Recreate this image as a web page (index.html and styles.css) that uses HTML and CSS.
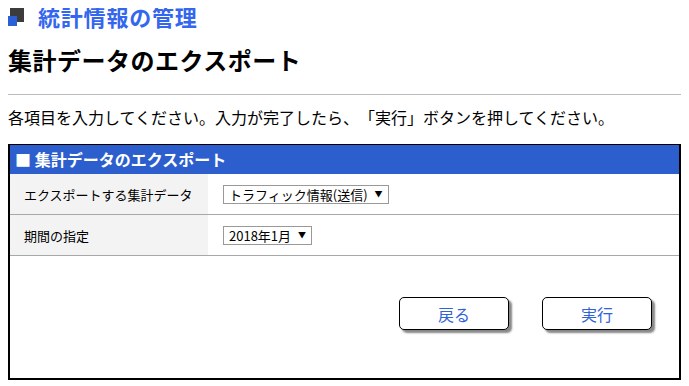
FILE: index.html
```html
<!DOCTYPE html>
<html>

<head>
    <title>統計情報の管理</title>
    <link rel="stylesheet" href="styles.css">
</head>

<body>
    <!-- Page heading -->
    <div class="page-title">
        <span class="title-icon">
            <span class="icon-back"></span>
            <span class="icon-front"></span>
        </span>
        <span class="title-text">統計情報の管理</span>
    </div>

    <h2 class="section-title">集計データのエクスポート</h2>
    <hr class="divider">

    <p class="lead">各項目を入力してください。入力が完了したら、「実行」ボタンを押してください。</p>

    <!-- Export form panel -->
    <div class="panel">
        <div class="panel-header">■ 集計データのエクスポート</div>

        <div class="form-row">
            <div class="form-label">エクスポートする集計データ</div>
            <div class="form-field">
                <div class="fake-select">トラフィック情報(送信)<span class="arrow">▼</span></div>
            </div>
        </div>

        <div class="form-row">
            <div class="form-label">期間の指定</div>
            <div class="form-field">
                <div class="fake-select">2018年1月<span class="arrow">▼</span></div>
            </div>
        </div>

        <div class="button-area">
            <button class="btn">戻る</button>
            <button class="btn">実行</button>
        </div>
    </div>
</body>

</html>
```

FILE: styles.css
```css
/* Base */
body {
    margin: 8px;
    font-family: "Noto Sans CJK JP", "Noto Sans", sans-serif;
    color: #000;
    background: #fff;
    text-spacing-trim: space-all;
}

/* Page title with the two-square icon */
.page-title {
    display: flex;
    align-items: center;
    height: 24px;
    margin-top: -4px;
}

.title-icon {
    position: relative;
    width: 17px;
    height: 20px;
    margin-left: -1px;
    margin-right: 14px;
}

.icon-back {
    position: absolute;
    left: 3px;
    top: 2px;
    width: 14px;
    height: 14px;
    background: #3c3c3c;
}

.icon-front {
    position: absolute;
    left: 0;
    top: 10px;
    width: 10px;
    height: 10px;
    background: #2a5fd6;
}

.title-text {
    font-size: 22px;
    font-weight: bold;
    color: #3466ee;
    letter-spacing: 0.8px;
}

/* Section heading */
.section-title {
    font-size: 24px;
    font-weight: bold;
    margin: 14px 0 0;
    line-height: 36px;
    letter-spacing: 0.5px;
}

.divider {
    border: none;
    border-top: 1px solid #bbb;
    margin: 16px 0 0;
}

.lead {
    font-size: 16px;
    margin: 10px 0 0;
    line-height: 24px;
}

/* Panel */
.panel {
    margin-top: 15px;
    border: 2px solid #000;
    border-top-width: 1px;
}

.panel-header {
    background: #2c5fcd;
    color: #fff;
    font-size: 16px;
    font-weight: bold;
    height: 29px;
    line-height: 28px;
    padding-left: 5px;
}

.form-row {
    display: flex;
    height: 40px;
    border-bottom: 1px solid #a8a8a8;
}

.form-label {
    width: 184px;
    background: #f3f3f3;
    font-size: 13px;
    padding-left: 14px;
    display: flex;
    align-items: center;
}

.form-field {
    display: flex;
    align-items: center;
    padding-left: 15px;
}

.fake-select {
    border: 1px solid #999;
    font-size: 13px;
    height: 17px;
    line-height: 17px;
    padding: 0 5px 0 5px;
    background: #fff;
}

.arrow {
    font-size: 8px;
    margin-left: 7px;
    position: relative;
    top: -3px;
}

/* Buttons */
.button-area {
    display: flex;
    justify-content: flex-end;
    gap: 33px;
    padding: 41px 27px 48px 0;
}

.btn {
    width: 110px;
    height: 33px;
    background: #fff;
    border: 1px solid #000;
    border-radius: 5px;
    box-shadow: 3px 3px 2px #888;
    color: #3163d8;
    font-family: "Noto Sans CJK JP", sans-serif;
    font-size: 16px;
    padding: 0;
}
```
